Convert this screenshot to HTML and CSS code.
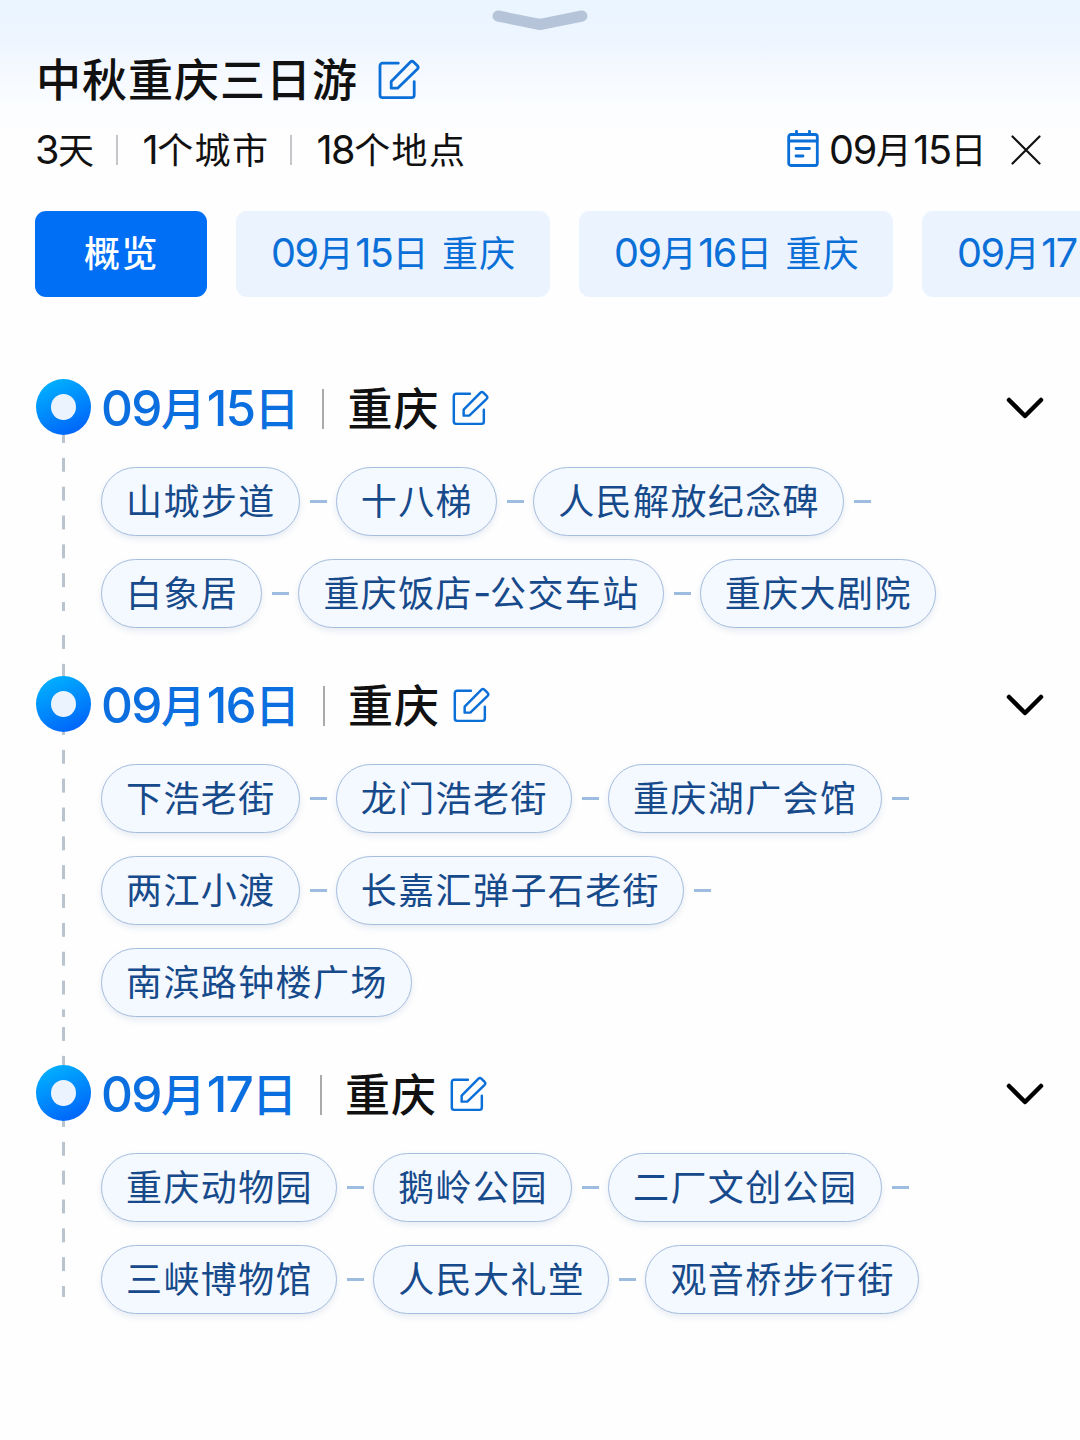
FILE: index.html
```html
<!DOCTYPE html>
<html lang="zh-CN">
<head>
    <meta charset="UTF-8">
    <meta name="viewport" content="width=device-width, initial-scale=1.0">
    <title>中秋重庆三日游</title>
    <link rel="stylesheet" href="styles.css">
</head>
<body>
    <!-- Shared icons -->
    <svg class="icon-defs" width="0" height="0">
        <symbol id="icon-edit" viewBox="0 0 42 41">
            <path d="M20.3 4.2H4.6a2.6 2.6 0 0 0-2.6 2.6V36a2.6 2.6 0 0 0 2.6 2.6h29a2.6 2.6 0 0 0 2.6-2.6V22.6"/>
            <path d="M13.2 22.4 32.4 3q1.6-1.5 3.2 0l3.8 3.8q1.5 1.6 0 3.2L19.6 29.2h-6.4z"/>
        </symbol>
        <symbol id="icon-chevron" viewBox="0 0 38 22">
            <path d="M3 3l16 16L35 3"/>
        </symbol>
    </svg>

    <div class="sheet">
        <div class="handle">
            <svg width="96" height="22" viewBox="0 0 96 22"><path d="M6 6l42 8.500 42-8.500"/></svg>
        </div>

        <header class="trip-header">
            <div class="title-row">
                <h1>中秋重庆三日游</h1>
                <svg class="icon edit-large"><use href="#icon-edit"/></svg>
            </div>
            <div class="meta-row">
                <span class="meta"><span class="num">3</span>天</span>
                <i class="divider"></i>
                <span class="meta"><span class="num">1</span>个城市</span>
                <i class="divider"></i>
                <span class="meta"><span class="num">18</span>个地点</span>
                <div class="start-date">
                    <svg class="icon calendar" viewBox="0 0 32 37">
                        <rect x="1.700" y="4.500" width="28.600" height="31" rx="2.200"/>
                        <path d="M2 11h28M9.500 1.200V4M22.500 1.200V4M9 18.500h13.500M9 26h7"/>
                    </svg>
                    <span class="meta"><span class="num">09</span>月<span class="num">15</span>日</span>
                    <svg class="close" viewBox="0 0 30 30"><path d="M1.500 1.500l27 27M28.500 1.500l-27 27"/></svg>
                </div>
            </div>
        </header>

        <nav class="tabs">
            <div class="tab active">概览</div>
            <div class="tab"><span class="num">09</span>月<span class="num">15</span>日<b class="space"></b>重庆</div>
            <div class="tab"><span class="num">09</span>月<span class="num">16</span>日<b class="space"></b>重庆</div>
            <div class="tab"><span class="num">09</span>月<span class="num">17</span>日<b class="space"></b>重庆</div>
        </nav>

        <!-- Itinerary -->
        <main class="days">
            <section class="day day-1">
                <div class="rail"><div class="pin"></div><div class="line"></div><div class="line-tail"></div></div>
                <div class="day-body">
                    <div class="day-head">
                        <h2><span class="num">09</span>月<span class="num">15</span>日</h2>
                        <i class="divider"></i>
                        <span class="city">重庆</span>
                        <svg class="icon edit-small"><use href="#icon-edit"/></svg>
                        <svg class="chevron"><use href="#icon-chevron"/></svg>
                    </div>
                    <div class="places">
                        <div class="row"><span class="place">山城步道</span><i></i><span class="place">十八梯</span><i></i><span class="place">人民解放纪念碑</span><i></i></div>
                        <div class="row"><span class="place">白象居</span><i></i><span class="place">重庆饭店<span class="hyphen">-</span>公交车站</span><i></i><span class="place">重庆大剧院</span></div>
                    </div>
                </div>
            </section>

            <section class="day day-2">
                <div class="rail"><div class="pin"></div><div class="line"></div><div class="line-tail"></div></div>
                <div class="day-body">
                    <div class="day-head">
                        <h2><span class="num">09</span>月<span class="num">16</span>日</h2>
                        <i class="divider"></i>
                        <span class="city">重庆</span>
                        <svg class="icon edit-small"><use href="#icon-edit"/></svg>
                        <svg class="chevron"><use href="#icon-chevron"/></svg>
                    </div>
                    <div class="places">
                        <div class="row"><span class="place">下浩老街</span><i></i><span class="place">龙门浩老街</span><i></i><span class="place">重庆湖广会馆</span><i></i></div>
                        <div class="row"><span class="place">两江小渡</span><i></i><span class="place">长嘉汇弹子石老街</span><i></i></div>
                        <div class="row"><span class="place">南滨路钟楼广场</span></div>
                    </div>
                </div>
            </section>

            <section class="day day-3">
                <div class="rail"><div class="pin"></div><div class="line"></div></div>
                <div class="day-body">
                    <div class="day-head">
                        <h2><span class="num">09</span>月<span class="num">17</span>日</h2>
                        <i class="divider"></i>
                        <span class="city">重庆</span>
                        <svg class="icon edit-small"><use href="#icon-edit"/></svg>
                        <svg class="chevron"><use href="#icon-chevron"/></svg>
                    </div>
                    <div class="places">
                        <div class="row"><span class="place">重庆动物园</span><i></i><span class="place">鹅岭公园</span><i></i><span class="place">二厂文创公园</span><i></i></div>
                        <div class="row"><span class="place">三峡博物馆</span><i></i><span class="place">人民大礼堂</span><i></i><span class="place">观音桥步行街</span></div>
                    </div>
                </div>
            </section>
        </main>
    </div>
</body>
</html>
```
FILE: styles.css
```css
* {
    box-sizing: border-box;
}

body {
    margin: 0;
    font-family: "Noto Sans CJK SC", sans-serif;
    font-size: 36px;
    color: #111;
    background-color: #fefefe;
}

h1, h2 {
    margin: 0;
    font-weight: 500;
}

svg {
    flex: none;
    fill: none;
    stroke-linecap: round;
    stroke-linejoin: round;
}

.icon-defs {
    display: block;
}

.sheet {
    height: 1440px;
    overflow: hidden;
    background: linear-gradient(#eaf5ff 0, #eef5ff 42px, #f6faff 75px, #fefefe 135px);
}

.num {
    font-family: Inter, sans-serif;
    font-size: 1.1em;
    line-height: 1px;
    letter-spacing: -0.035em;
}

.handle {
    display: flex;
    justify-content: center;
    padding-top: 10px;
    height: 49px;
}

.handle svg {
    stroke: #b5c4d8;
    stroke-width: 11px;
}

/* Header */
.trip-header {
    padding: 0 39px 0 35px;
}

.title-row {
    display: flex;
    align-items: center;
    height: 60px;
}

.title-row h1 {
    padding: 0 0 2px 1px;
    font-size: 45px;
    line-height: 60px;
    letter-spacing: 1px;
}

.icon {
    stroke: #0b6fd8;
    stroke-width: 2.8px;
}

.edit-large {
    width: 42px;
    height: 41px;
    margin-left: 20px;
}

.meta-row {
    display: flex;
    align-items: center;
    height: 81px;
    line-height: 76px;
    letter-spacing: 1.4px;
}

.meta {
    padding-bottom: 3px;
}

.divider {
    width: 2px;
    height: 30px;
    background-color: #c4c6c9;
}

.meta-row .divider {
    margin: 0 24px 0 21px;
}

.start-date {
    display: flex;
    align-items: center;
    margin-left: auto;
}

.calendar {
    width: 32px;
    height: 37px;
    margin: 0 10px 2px 0;
}

.close {
    width: 30px;
    height: 30px;
    margin-left: 23px;
    stroke: #111;
    stroke-width: 2.2px;
}

/* Day tabs */
.tabs {
    display: flex;
    gap: 29px;
    margin-top: 21px;
    padding-left: 35px;
    overflow: hidden;
}

.tab {
    flex: none;
    width: 314px;
    height: 86px;
    line-height: 81px;
    padding-left: 35px;
    border-radius: 11px;
    letter-spacing: 1.4px;
    white-space: nowrap;
    color: #0b6fd8;
    background-color: #eaf3fe;
}

.tab.active {
    width: 172px;
    padding-left: 49px;
    font-weight: 500;
    color: #fff;
    background-color: #006ff6;
}

.space {
    display: inline-block;
    width: 12px;
}

/* Timeline */
.days {
    padding: 82px 36px 0;
}

.day {
    display: flex;
}

.rail {
    display: flex;
    flex-direction: column;
    align-items: center;
    width: 55px;
    margin-right: 10px;
}

.pin {
    width: 55px;
    height: 56px;
    border: 15.5px solid transparent;
    border-radius: 50%;
    background: linear-gradient(#eaf3fe, #eaf3fe) padding-box, linear-gradient(155deg, #00b0ff 10%, #0068fa 85%) border-box;
}

.line, .line-tail {
    width: 3px;
    background: linear-gradient(#b9c4ce 14px, transparent 14px) 0 0 / 3px 28.85px repeat-y;
}

.line {
    flex: 1;
}

.day-1 .line {
    background-position-y: -6px;
}

.day-2 .line {
    background-position-y: -11px;
}

.day-3 .line {
    background-position-y: -8px;
    margin-bottom: 17px;
}

.day-1 .line-tail {
    height: 41px;
    margin-top: 24px;
}

.day-2 .line-tail {
    height: 38px;
    margin-top: 10px;
}

.day-body {
    flex: 1;
    padding-bottom: 48px;
}

.day-3 .day-body {
    padding-bottom: 0;
}

.day-head {
    display: flex;
    align-items: center;
    height: 58px;
    margin-bottom: 30px;
    font-size: 45px;
    font-weight: 500;
    letter-spacing: 1px;
}

.day-head h2 {
    padding-bottom: 3px;
    font-size: 45px;
    line-height: 54px;
    color: #0b6fe0;
}

.day-head .divider {
    height: 40px;
    margin: 2px 23px 0 22px;
    background-color: #aaa;
}

.city {
    padding-bottom: 3px;
    line-height: 54px;
}

.edit-small {
    width: 37px;
    height: 36px;
    margin-left: 13px;
}

.chevron {
    width: 38px;
    height: 22px;
    margin-left: auto;
    stroke: #000;
    stroke-width: 4.5px;
}

/* Places */
.places {
    display: flex;
    flex-direction: column;
    gap: 23px;
}

.row {
    display: flex;
    align-items: center;
}

.row i {
    width: 17px;
    height: 3px;
    margin: 0 9px 0 10px;
    background-color: #9dbde0;
}

.place {
    height: 69px;
    line-height: 62px;
    padding: 0 23.2px 0 24px;
    border: 1px solid #a5bddd;
    border-radius: 35px;
    letter-spacing: 1.4px;
    white-space: nowrap;
    color: #164a8a;
    background-color: #f4f8ff;
    box-shadow: 0 3px 6px rgba(60, 100, 160, 0.12);
}

.hyphen {
    display: inline-block;
    width: 17px;
    font-family: Inter, sans-serif;
    font-size: 40px;
    line-height: 1px;
}
```
